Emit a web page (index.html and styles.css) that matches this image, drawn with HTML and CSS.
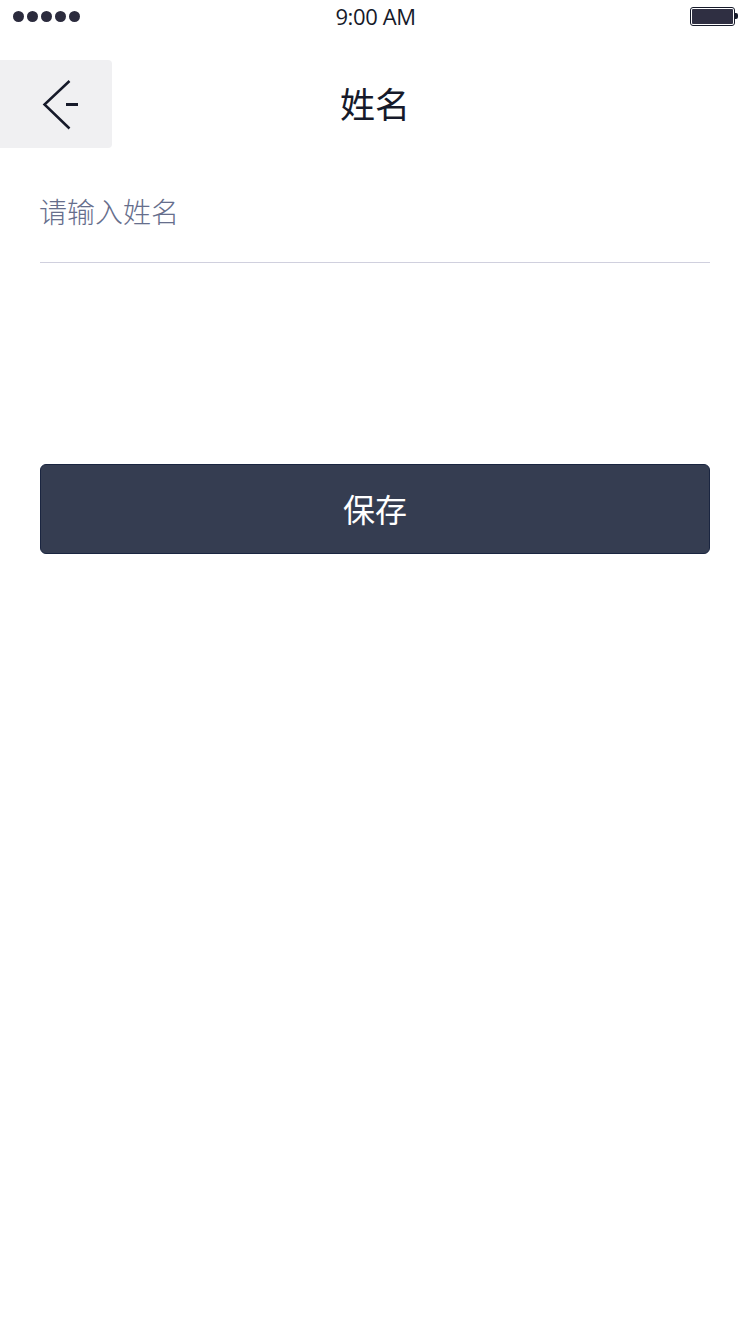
FILE: index.html
```html
<!DOCTYPE html>
<html>
	<head>
		<title>姓名</title>
		<link rel="stylesheet" href="styles.css">
	</head>
	<body>
		<div class="status">
			<div class="dots">
				<span class="dot"></span>
				<span class="dot"></span>
				<span class="dot"></span>
				<span class="dot"></span>
				<span class="dot"></span>
			</div>
			<div class="time">9:00 AM</div>
			<div class="battery">
				<div class="battery-body"><div class="battery-fill"></div></div>
				<div class="battery-tip"></div>
			</div>
		</div>

		<div class="nav">
			<div class="back">
				<svg width="38" height="52" viewBox="0 0 38 52">
					<path d="M28.500 3 L3.500 26.500 L28.500 50.500" fill="none" stroke="#161a2a" stroke-width="2.500"/>
					<path d="M25 26.500 H37" fill="none" stroke="#161a2a" stroke-width="3"/>
				</svg>
			</div>
			<h1 class="title">姓名</h1>
		</div>

		<form class="form" action="">
			<div class="field">
				<input class="input" autocomplete="off" placeholder="请输入姓名" />
			</div>
			<button class="save">保存</button>
		</form>
	</body>
</html>
```

FILE: styles.css
```css
html, body {
	margin: 0;
	background: #fff;
}
body {
	width: 750px;
	height: 1334px;
	overflow: hidden;
	font-family: "Noto Sans CJK SC", sans-serif;
}

.status {
	height: 32px;
	padding: 0 12px 2px 13px;
	display: grid;
	grid-template-columns: 1fr auto 1fr;
	align-items: center;
}
.dots {
	display: flex;
	gap: 3px;
}
.dot {
	width: 11px;
	height: 11px;
	border-radius: 50%;
	background: #2b2b3d;
}
.time {
	font-family: "Open Sans", sans-serif;
	font-size: 22px;
	letter-spacing: -0.4px;
	color: #161a2a;
}
.battery {
	display: flex;
	justify-content: flex-end;
	align-items: center;
}
.battery-body {
	width: 41px;
	height: 15px;
	border: 1px solid #161a2a;
	border-radius: 3px;
	padding: 1px;
}
.battery-fill {
	height: 100%;
	background: #2f2f42;
	border-radius: 1px;
}
.battery-tip {
	width: 3px;
	height: 6px;
	background: #161a2a;
	border-radius: 0 2px 2px 0;
}

.nav {
	position: relative;
	margin-top: 26px;
	height: 88px;
	box-sizing: border-box;
	padding-bottom: 3px;
	display: flex;
	align-items: center;
	justify-content: center;
}
.back {
	position: absolute;
	left: 0;
	top: 0;
	width: 112px;
	height: 88px;
	background: #f0f0f2;
	border-radius: 0 4px 4px 0;
	display: flex;
	align-items: center;
	padding-left: 41px;
	box-sizing: border-box;
}
.title {
	margin: 0;
	font-size: 35px;
	font-weight: 400;
	color: #161a2a;
}

.form {
	margin: 0 40px;
}
.field {
	height: 115px;
	border-bottom: 1px solid #d0d0de;
	box-sizing: border-box;
}
.input {
	width: calc(100% + 1px);
	height: 66px;
	margin: 30px 0 0 -1px;
	padding: 0;
	border: none;
	outline: none;
	font-family: inherit;
	font-size: 28px;
	font-weight: 300;
}
.input::placeholder {
	color: #666e8c;
	opacity: 1;
}
.save {
	display: block;
	width: 100%;
	height: 90px;
	margin-top: 201px;
	padding: 0 0 2px;
	background: #353d51;
	border: 1px solid #1a2540;
	border-radius: 6px;
	color: #fff;
	font-family: inherit;
	font-size: 32px;
	font-weight: 400;
}
```
